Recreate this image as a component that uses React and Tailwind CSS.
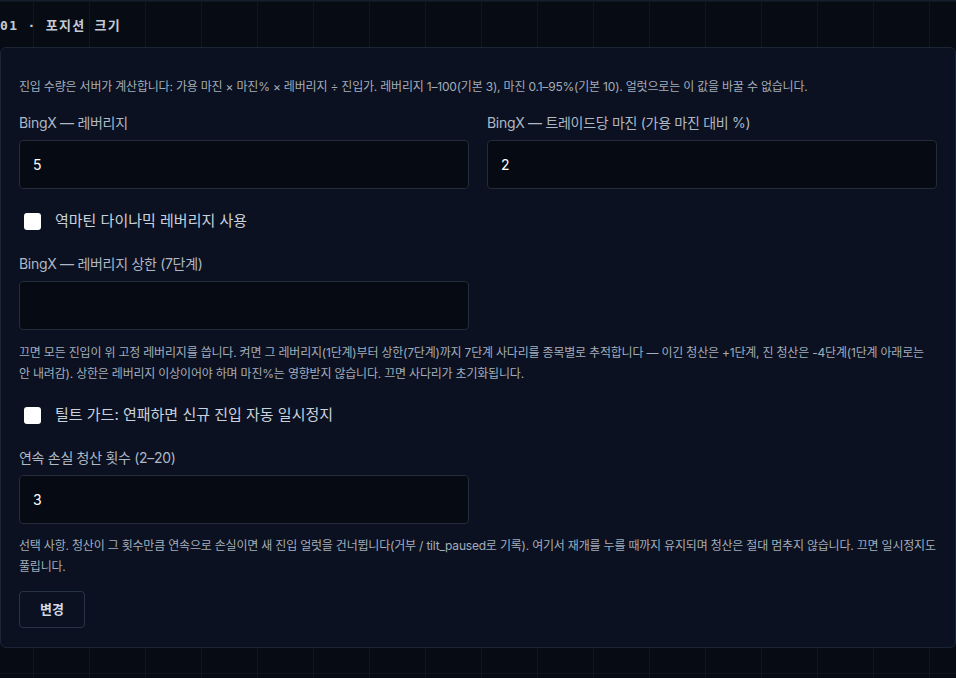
import { useState } from 'react';

const font = { fontFamily: '"Inter", "Noto Sans CJK KR", sans-serif' };

const Field = ({ label, value, onChange, className = '' }) => (
  <div className={className}>
    <label className="block text-[14px] leading-[20px] tracking-[-0.3px] text-[#aeb8c6]">{label}</label>
    <input
      type="text"
      value={value}
      onChange={(e) => onChange(e.target.value)}
      className="mt-[7px] w-full h-[49px] px-[13px] bg-[#060a12] border border-[#232c3b] rounded-[4px] text-[14px] text-white outline-none"
    />
  </div>
);

const Check = ({ label, checked, onChange, className = '' }) => (
  <label className={`flex items-center h-[22px] pl-[5px] cursor-pointer ${className}`}>
    <input
      type="checkbox"
      checked={checked}
      onChange={(e) => onChange(e.target.checked)}
      className="appearance-none w-[17px] h-[17px] bg-white rounded-[3px] shrink-0"
    />
    <span className="ml-[14px] text-[15px] text-[#c9d1dc]">{label}</span>
  </label>
);

export default function App() {
  const [leverage, setLeverage] = useState('5');
  const [margin, setMargin] = useState('2');
  const [dynamic, setDynamic] = useState(false);
  const [cap, setCap] = useState('');
  const [tilt, setTilt] = useState(false);
  const [streak, setStreak] = useState('3');

  return (
    <div
      style={font}
      className="min-h-[678px] w-[956px] overflow-hidden bg-[#070b13] bg-[linear-gradient(to_right,#0f1521_1px,transparent_1px),linear-gradient(to_bottom,#0f1521_1px,transparent_1px)] bg-[size:56px_56px] bg-[position:33px_0px] border-t border-[#161e2b]"
    >
      <div className="h-[46px] flex items-center pt-[3px]">
        <h2 className="font-['DejaVu_Sans_Mono','Noto_Sans_CJK_KR',monospace] font-bold text-[13px] tracking-[0.1em] text-[#c3cbd7]">
          01 · 포지션 크기
        </h2>
      </div>

      <div className="w-[956px] bg-[#0b1120] border border-[#1c2535] rounded-[6px] px-[18px] pt-[30px] pb-[19px]">
        <p className="text-[12px] leading-[18px] tracking-[-0.2px] text-[#a3adbb]">
          진입 수량은 서버가 계산합니다: 가용 마진 × 마진% × 레버리지 ÷ 진입가. 레버리지 1–100(기본 3), 마진 0.1–95%(기본 10). 얼럿으로는 이 값을 바꿀 수 없습니다.
        </p>

        <div className="mt-[17px] grid grid-cols-2 gap-[18px]">
          <Field label="BingX — 레버리지" value={leverage} onChange={setLeverage} />
          <Field label="BingX — 트레이드당 마진 (가용 마진 대비 %)" value={margin} onChange={setMargin} />
        </div>

        <Check className="mt-[21px]" label="역마틴 다이나믹 레버리지 사용" checked={dynamic} onChange={setDynamic} />

        <div className="mt-[22px] grid grid-cols-2 gap-[18px]">
          <Field label="BingX — 레버리지 상한 (7단계)" value={cap} onChange={setCap} />
        </div>

        <p className="mt-[12px] text-[12px] leading-[21px] tracking-[-0.2px] text-[#a3adbb]">
          끄면 모든 진입이 위 고정 레버리지를 씁니다. 켜면 그 레버리지(1단계)부터 상한(7단계)까지 7단계 사다리를 종목별로 추적합니다 — 이긴 청산은 +1단계, 진 청산은 -4단계(1단계 아래로는 안 내려감). 상한은 레버리지 이상이어야 하며 마진%는 영향받지 않습니다. 끄면 사다리가 초기화됩니다.
        </p>

        <Check className="mt-[20px]" label="틸트 가드: 연패하면 신규 진입 자동 일시정지" checked={tilt} onChange={setTilt} />

        <div className="mt-[22px] grid grid-cols-2 gap-[18px]">
          <Field label="연속 손실 청산 횟수 (2–20)" value={streak} onChange={setStreak} />
        </div>

        <p className="mt-[11px] text-[12px] leading-[21px] tracking-[-0.2px] text-[#a3adbb]">
          선택 사항. 청산이 그 횟수만큼 연속으로 손실이면 새 진입 얼럿을 건너뜁니다(거부 / tilt_paused로 기록). 여기서 재개를 누를 때까지 유지되며 청산은 절대 멈추지 않습니다. 끄면 일시정지도 풀립니다.
        </p>

        <button
          type="button"
          className="mt-[14px] h-[37px] px-[20px] border border-[#283345] rounded-[4px] text-[13px] font-bold text-[#d3dae4] bg-transparent"
        >
          변경
        </button>
      </div>
    </div>
  );
}
